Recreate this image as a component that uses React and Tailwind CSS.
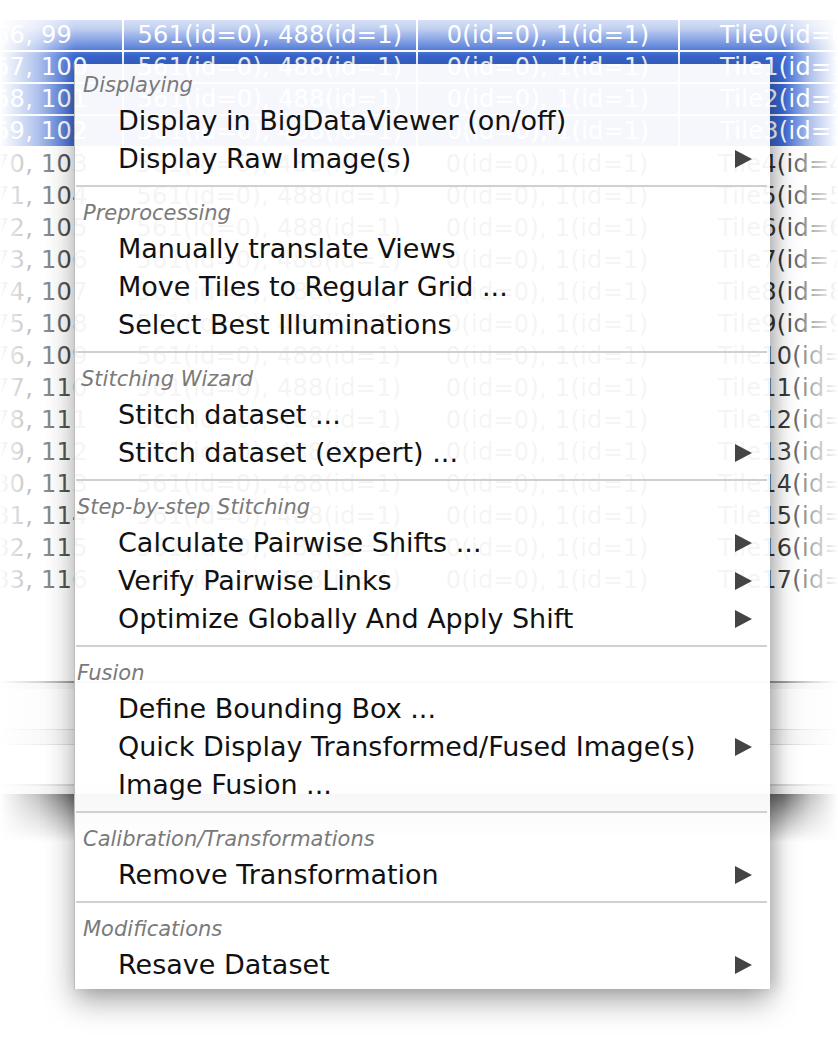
import React from "react";

const ROWS = Array.from({ length: 18 }, (_, i) => ({
  a: `${66 + i}, ${99 + i}`,
  b: "561(id=0), 488(id=1)",
  c: "0(id=0), 1(id=1)",
  d: `Tile${i}(id=${i})`,
  sel: i < 4,
}));

const MENU = [
  { title: "Displaying", tx: "pl-[8px]", items: [
    ["Display in BigDataViewer (on/off)", false],
    ["Display Raw Image(s)", true],
  ] },
  { title: "Preprocessing", tx: "pl-[8px]", items: [
    ["Manually translate Views", false],
    ["Move Tiles to Regular Grid ...", false],
    ["Select Best Illuminations", false],
  ] },
  { title: "Stitching Wizard", tx: "pl-[6px]", items: [
    ["Stitch dataset ...", false],
    ["Stitch dataset (expert) ...", true],
  ] },
  { title: "Step-by-step Stitching", tx: "pl-[2px]", items: [
    ["Calculate Pairwise Shifts ...", true],
    ["Verify Pairwise Links", true],
    ["Optimize Globally And Apply Shift", true],
  ] },
  { title: "Fusion", tx: "pl-[2px]", items: [
    ["Define Bounding Box ...", false],
    ["Quick Display Transformed/Fused Image(s)", true],
    ["Image Fusion ...", false],
  ] },
  { title: "Calibration/Transformations", tx: "pl-[8px]", items: [
    ["Remove Transformation", true],
  ] },
  { title: "Modifications", tx: "pl-[8px]", items: [
    ["Resave Dataset", true],
  ] },
];

function Arrow() {
  return (
    <svg width="17" height="18" viewBox="0 0 17 18" className="shrink-0">
      <polygon points="0,0 17,9 0,18" fill="#444" />
    </svg>
  );
}

export default function App() {
  return (
    <div className="relative w-[838px] h-[1056px] overflow-hidden bg-white font-['DejaVu_Sans',sans-serif]">
      {/* table behind the menu */}
      <div className="pt-[20px] text-[24px] tracking-[0.3px] text-[#333]">
        {ROWS.map((r) => (
          <div key={r.a} className={`flex h-[32px] items-center whitespace-nowrap ${r.sel ? "bg-[#3a68d4] text-white border-b-2 border-white" : ""}`}>
            <div className="w-[122px] shrink-0 overflow-hidden"><span className="inline-block -ml-[6px]">{r.a}</span></div>
            <div className={`w-[294px] shrink-0 text-center h-full flex items-center justify-center ${r.sel ? "border-l-2 border-white" : ""}`}>{r.b}</div>
            <div className={`w-[262px] shrink-0 text-center h-full flex items-center justify-center ${r.sel ? "border-l-2 border-white" : ""}`}>{r.c}</div>
            <div className={`w-[200px] shrink-0 h-full flex items-center pl-[40px] ${r.sel ? "border-l-2 border-white" : ""}`}>{r.d}</div>
          </div>
        ))}
      </div>

      {/* bottom of the window */}
      <div className="mt-[85px]">
        <div className="h-[2px] bg-[#9a9a9a]" />
        <div className="h-[6px] bg-[#efefef]" />
        <div className="h-[40px] bg-[#fafafa]" />
        <div className="h-[1px] bg-[#d8d8d8]" />
        <div className="h-[14px] bg-[#f3f3f3]" />
        <div className="h-[1px] bg-[#d8d8d8]" />
        <div className="h-[39px] bg-white" />
        <div className="h-[2px] bg-[#d4d4d4]" />
        <div className="h-[8px] bg-[#ededed]" />
        <div className="h-[48px] bg-gradient-to-b from-[#6a6a6a] via-[#b8b8b8] to-white" />
      </div>

      {/* vignette */}
      <div className="absolute left-0 top-0 h-full w-[75px] bg-gradient-to-r from-white via-white/60 to-transparent" />
      <div className="absolute right-0 top-0 h-full w-[55px] bg-gradient-to-l from-white via-white/60 to-transparent" />
      <div className="absolute left-0 top-0 w-full h-[56px] bg-gradient-to-b from-white via-white/70 to-transparent" />

      {/* context menu */}
      <div className="absolute left-[74px] top-[64px] w-[696px] bg-white/[0.95] border-l border-[#bdbdbd] shadow-[0_12px_28px_rgba(0,0,0,0.35),6px_0_14px_rgba(0,0,0,0.12)] pb-[5px]">
        {MENU.map((g, gi) => (
          <div key={g.title}>
            {gi > 0 && <div className="mt-[7px] mb-[5px] ml-[1px] mr-[3px] h-[2px] bg-[#d0d0d0]" />}
            <div className={`h-[38px] flex items-center pt-[5px] italic text-[21px] text-[#7a7a7a] ${g.tx}`}>{g.title}</div>
            {g.items.map(([label, sub]) => (
              <div key={label} className="h-[38px] flex items-center justify-between pl-[43px] pr-[18px] text-[27px] text-[#111] whitespace-nowrap">
                <span>{label}</span>
                {sub && <Arrow />}
              </div>
            ))}
          </div>
        ))}
      </div>
    </div>
  );
}
